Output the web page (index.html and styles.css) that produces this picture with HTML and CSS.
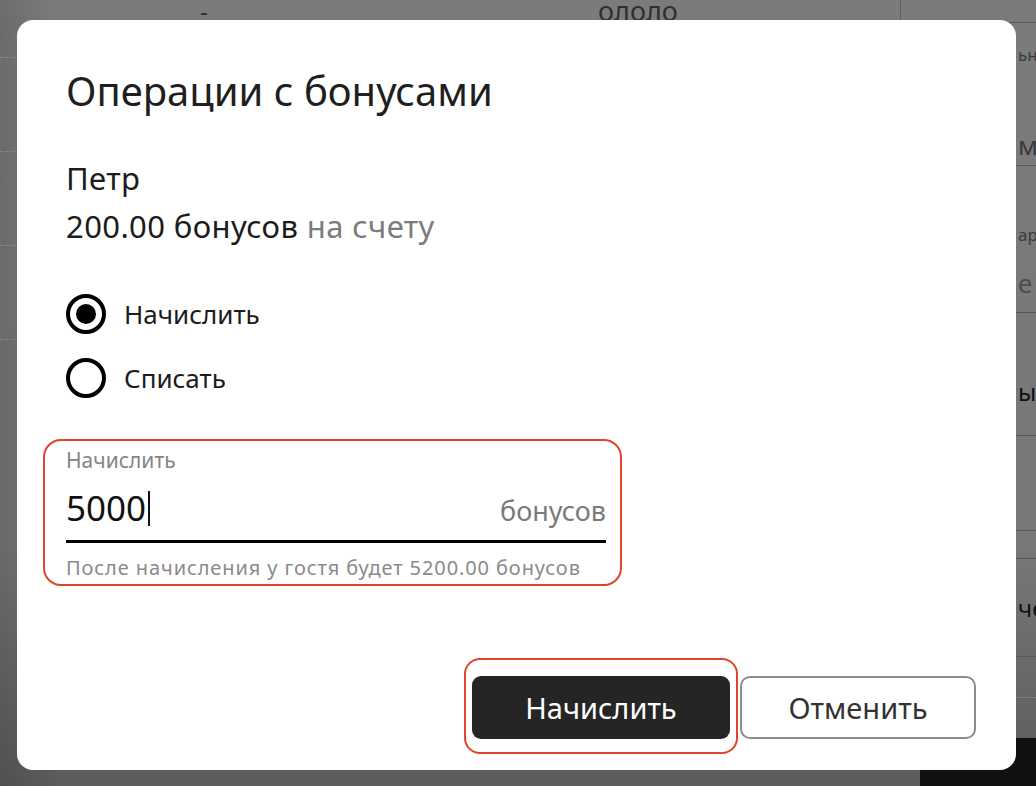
FILE: index.html
```html
<!DOCTYPE html>
<html lang="ru">
<head>
  <meta charset="UTF-8">
  <meta name="viewport" content="width=device-width, initial-scale=1.0">
  <title>Операции с бонусами</title>
  <link rel="stylesheet" href="styles.css">
</head>
<body>
  <!-- page behind the dialog -->
  <div class="page">
    <div class="page-main">
      <div class="top-row">
        <span class="cell-dash">-</span>
        <span class="cell-name">ололо</span>
      </div>
      <div class="dotted-row first"></div>
      <div class="dotted-row"></div>
      <div class="dotted-row"></div>
      <div class="dotted-row"></div>
    </div>
    <div class="page-side">
      <div class="side-row side-head"></div>
      <div class="side-row side-one">
        <div class="side-sub">ьный</div>
        <div class="side-val">мер</div>
      </div>
      <div class="side-row side-two">
        <div class="side-sub">арта</div>
        <div class="side-val muted-val">е з</div>
      </div>
      <div class="side-row side-three"><div class="side-bold">ы</div></div>
      <div class="side-row side-four"></div>
      <div class="side-row side-five"></div>
      <div class="side-row side-six"><div class="side-bold">че</div></div>
      <div class="side-row side-dots"></div>
      <div class="side-foot"><div class="side-gap"></div><div class="side-black"></div></div>
    </div>
  </div>

  <div class="modal">
    <h1 class="modal-title">Операции с бонусами</h1>

    <div class="guest">
      <div class="guest-name">Петр</div>
      <div class="guest-balance">200.00 бонусов <span class="muted">на счету</span></div>
    </div>

    <div class="radios">
      <label class="radio">
        <span class="radio-mark checked"></span>
        <span class="radio-label">Начислить</span>
      </label>
      <label class="radio">
        <span class="radio-mark"></span>
        <span class="radio-label">Списать</span>
      </label>
    </div>

    <div class="field marked">
      <div class="field-label">Начислить</div>
      <div class="field-input">
        <span class="field-value">5000<span class="caret"></span></span>
        <span class="field-unit">бонусов</span>
      </div>
      <div class="field-hint">После начисления у гостя будет 5200.00 бонусов</div>
    </div>

    <div class="actions">
      <span class="marked marked-btn"><button class="btn btn-primary">Начислить</button></span>
      <button class="btn btn-outline">Отменить</button>
    </div>
  </div>
</body>
</html>
```

FILE: styles.css
```css
html, body {
  margin: 0;
  height: 100%;
}

body {
  font-family: 'Noto Sans', 'DejaVu Sans', sans-serif;
  color: #1c1c1c;
  background: linear-gradient(to bottom, #7b7b7b 0%, #777777 70%, #5b5b5b 100%);
  overflow: hidden;
}

/* ---------- page behind the dialog ---------- */
.page {
  display: flex;
  height: 786px;
  background: linear-gradient(to right, rgba(0,0,0,0.12), rgba(0,0,0,0) 60px);
}

.page-main {
  width: 900px;
  border-right: 1px solid #5e5e5e;
}

.top-row {
  height: 30px;
  display: flex;
  align-items: center;
  margin-top: -4px;
  color: #2f2f2f;
  font-size: 27px;
  line-height: 30px;
}

.cell-dash {
  margin-left: 200px;
  width: 398px;
  font-size: 24px;
}

.dotted-row {
  height: 93px;
  border-bottom: 1px dotted #8c8c8c;
}
.dotted-row.first { height: 31px; }

.page-side {
  flex: 1;
  display: flex;
  flex-direction: column;
  color: #3a3a3a;
  white-space: nowrap;
  overflow: hidden;
}

.side-row {
  flex: none;
  border-bottom: 1px solid #5a5a5a;
  padding-left: 117px;
  box-sizing: content-box;
}

.side-head { height: 22px; }

.side-sub { font-size: 17px; line-height: 22px; }
.side-val { font-size: 26px; line-height: 30px; }
.muted-val { color: #4c4c4c; }
.side-bold { font-size: 24px; line-height: 30px; color: #111; }

.side-one { height: 142px; }
.side-one .side-sub { margin-top: 21px; }
.side-one .side-val { margin-top: 64px; }

.side-two { height: 146px; }
.side-two .side-sub { margin-top: 58px; }
.side-two .side-val { margin-top: 22px; }

.side-three { height: 122px; }
.side-three .side-bold { margin-top: 64px; }

.side-four { height: 94px; }
.side-five { height: 27px; }

.side-six { height: 97px; }
.side-six .side-bold { margin-top: 34px; }

.side-dots { height: 40px; border-bottom: 1px dotted #8c8c8c; }

.side-foot {
  display: flex;
  flex: 1;
  margin-top: 40px;
}
.side-gap { width: 19px; }
.side-black { flex: 1; background: #111; }

/* ---------- dialog ---------- */
.modal {
  position: fixed;
  left: 17px;
  top: 20px;
  width: 999px;
  height: 750px;
  box-sizing: border-box;
  padding: 49px 40px 0 49px;
  background: #fff;
  border-radius: 16px;
}

.modal-title {
  margin: 0;
  font-size: 40px;
  font-weight: 400;
  line-height: 44px;
  color: #1f1f1f;
}

.guest {
  margin-top: 41px;
  font-size: 31px;
  line-height: 48px;
  letter-spacing: 0.4px;
}

.muted { color: #7c7c7c; }

.radios {
  margin-top: 44px;
  display: flex;
  flex-direction: column;
  gap: 24px;
}

.radio {
  display: flex;
  align-items: center;
  gap: 18px;
  font-size: 26px;
}

.radio-mark {
  width: 40px;
  height: 40px;
  box-sizing: border-box;
  border: 4px solid #000;
  border-radius: 50%;
  display: flex;
  align-items: center;
  justify-content: center;
}

.radio-mark.checked::before {
  content: "";
  width: 20px;
  height: 20px;
  border-radius: 50%;
  background: #000;
}

/* input field */
.field {
  width: 540px;
  margin-top: 50px;
}

.field-label {
  font-size: 21px;
  line-height: 24px;
  color: #858585;
}

.field-input {
  display: flex;
  align-items: baseline;
  justify-content: space-between;
  margin-top: 16px;
  padding-bottom: 9px;
  border-bottom: 3px solid #000;
  line-height: 40px;
}

.field-value {
  font-size: 35px;
  color: #111;
  display: flex;
  align-items: center;
}

.caret {
  display: inline-block;
  width: 2px;
  height: 35px;
  background: #111;
  margin-left: 2px;
}

.field-unit {
  font-size: 27px;
  color: #7a7a7a;
}

.field-hint {
  margin-top: 14px;
  font-size: 20px;
  line-height: 22px;
  letter-spacing: 0.9px;
  color: #8a8a8a;
}

/* red annotation outlines */
.marked {
  position: relative;
}

.marked::after {
  content: "";
  position: absolute;
  top: -9px;
  bottom: -7px;
  left: -23px;
  right: -16px;
  border: 2px solid #e2442a;
  border-radius: 18px;
  pointer-events: none;
}

.marked-btn::after {
  top: -18px;
  bottom: -15px;
  left: -8px;
  right: -8px;
  border-radius: 16px;
}

/* buttons */
.actions {
  margin-top: 97px;
  display: flex;
  justify-content: flex-end;
  gap: 10px;
}

.marked-btn { display: flex; }

.btn {
  font-family: inherit;
  font-size: 29px;
  height: 63px;
  border-radius: 9px;
  cursor: pointer;
}

.btn-primary {
  width: 258px;
  border: none;
  background: #252525;
  color: #fff;
}

.btn-outline {
  width: 236px;
  background: #fff;
  color: #333;
  border: 2px solid #8c8c8c;
  border-radius: 10px;
}
```
